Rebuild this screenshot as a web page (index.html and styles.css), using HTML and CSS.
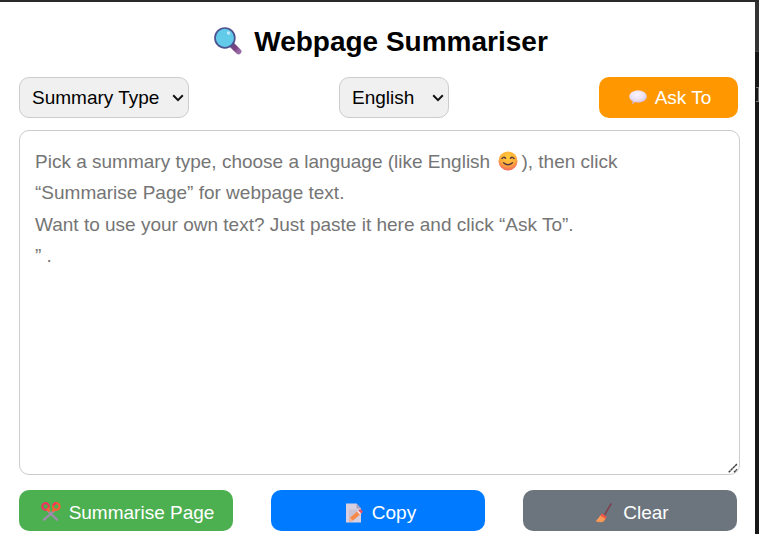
FILE: index.html
```html
<!DOCTYPE html>
<html lang="en">
<head>
<meta charset="utf-8">
<title>Webpage Summariser</title>
<link rel="stylesheet" href="styles.css">
</head>
<body>
<main class="popup">
  <h1 class="title">
    <svg class="title-icon" viewBox="0 0 28 28"><defs><linearGradient id="hd" x1="0" y1="0" x2="1" y2="1"><stop stop-color="#6b4d85"/><stop offset=".5" stop-color="#7b4080"/><stop offset="1" stop-color="#966aa5"/></linearGradient></defs><path d="M18 18l6.500 6.500" stroke="url(#hd)" stroke-width="5.8" stroke-linecap="round"/><circle cx="10.9" cy="10.9" r="9.9" fill="#62cbea" stroke="#4c5190" stroke-width="1.7"/><ellipse cx="14.5" cy="6" rx="1.8" ry="1.5" fill="#c5e8fa" transform="rotate(40 14.5 6)"/></svg>
    <span>Webpage Summariser</span>
  </h1>
  <div class="controls">
    <div class="picker picker-type">
      <select class="select" aria-label="Summary type"><option>Summary Type</option></select>
      <svg class="chevron" viewBox="0 0 12 8"><path d="M1.2 1.3L6 6.1l4.8-4.8" fill="none" stroke="#111" stroke-width="2"/></svg>
    </div>
    <div class="picker picker-lang">
      <select class="select" aria-label="Language"><option>English</option></select>
      <svg class="chevron" viewBox="0 0 12 8"><path d="M1.2 1.3L6 6.1l4.8-4.8" fill="none" stroke="#111" stroke-width="2"/></svg>
    </div>
    <button class="btn ask"><svg class="ask-icon" viewBox="0 0 18 15"><defs><radialGradient id="bb" cx=".45" cy=".3" r=".7"><stop stop-color="#fbf5ff"/><stop offset=".6" stop-color="#eadff2"/><stop offset="1" stop-color="#c7b2dc"/></radialGradient></defs><path d="M9 .4c5 0 8.8 2.6 8.8 6s-3.8 6-8.8 6q-1.7 0-3.200-.4Q4.700 13.900 3 14q.7-1.300.5-3Q.3 9.400.3 6.400C.3 3 4 .4 9 .4z" fill="url(#bb)"/></svg><span>Ask To</span></button>
  </div>
  <section class="editor">
    <p class="hint">Pick a summary type, choose a language (like English <svg class="smile" viewBox="0 0 20 20"><defs><radialGradient id="sm" cx=".5" cy=".3" r=".75"><stop stop-color="#ffcd3d"/><stop offset=".55" stop-color="#ffae37"/><stop offset="1" stop-color="#ef5b68"/></radialGradient></defs><circle cx="10" cy="10" r="9.500" fill="url(#sm)"/><path d="M4 7.500q1.700-2.300 3.600-.3M12.400 7.200q1.900-2 3.600.3M5.500 11.800q4.500 4 9 0" fill="none" stroke="#563344" stroke-width="1.300" stroke-linecap="round"/></svg>), then click<br>“Summarise Page” for webpage text.<br>Want to use your own text? Just paste it here and click “Ask To”.<br>” .</p>
    <svg class="grip" viewBox="0 0 10 10"><path d="M.7 9.300L9 1M6 9.300l3-3" stroke="#444" stroke-width="1.500" stroke-dasharray="2.600 .4"/></svg>
  </section>
  <div class="actions">
    <button class="btn summarise"><svg class="scissors" viewBox="0 0 20 19"><path d="M6.500 8.500l9.500 9.200M13.500 8.500L3 17.700" stroke="#a08bac" stroke-width="2.300" stroke-linecap="round"/><circle cx="4.600" cy="4.500" r="3.300" fill="none" stroke="#f2345f" stroke-width="2.200"/><circle cx="15.300" cy="4.500" r="3.300" fill="none" stroke="#ff5a35" stroke-width="2.200"/><path d="M12.200 3.500q1-2.300 3.100-2.300" fill="none" stroke="#f2345f" stroke-width="2.200"/><path d="M6.500 7.300l2 2M13.400 7.300l-2 2" stroke="#ff632f" stroke-width="2.500"/><path d="M8 5.500l-2 2.500" stroke="#f96432" stroke-width="2"/></svg><span>Summarise Page</span></button>
    <button class="btn copy"><svg class="memo" viewBox="0 0 17 20"><path d="M0 .5h10.500l4.500 5v14H0z" fill="#d8d0e1"/><path d="M10.500.5v5H15z" fill="#aaa0bd"/><path d="M3 6.500h8v9H3z" fill="#c9c1d4"/><path d="M3 18.800l1-4 8-7 3 3-8 6.800z" fill="#f58a49"/><path d="M11 8.700l1.300-1.100 3 3-1.300 1.200z" fill="#eee5ed"/><path d="M12.300 7.600l1.300-1.200q1-.5 1.800.3l1.100 1.200q.5.8-.1 1.500l-1.100 1.200z" fill="#e94f61"/><path d="M3 18.800l1-4 3 2.800z" fill="#f5b397"/></svg><span>Copy</span></button>
    <button class="btn clear"><svg class="broom" viewBox="0 0 16 20"><path d="M15 1L8.500 12" stroke="#813f4c" stroke-width="1.500" stroke-linecap="round"/><path d="M5.500 11.200q3.500.3 4.500 3.300-.8 3.500-3 4.400Q3 19.500.5 18.700L0 17.500q2.500-2 3.500-4z" fill="#f99150"/><path d="M5.800 10.600l4.800 3.200-.9 1.900-5.200-3.200z" fill="#ef5548"/><path d="M6.500 15.500l-2.300 3M4.500 14.500l-2.500 3" stroke="#ffb069"/></svg><span>Clear</span></button>
  </div>
</main>
<aside class="backdrop"><span class="edge"></span><span class="notch"></span></aside>
</body>
</html>
```
FILE: styles.css
```css
* { box-sizing: border-box; }
body {
  margin: 0;
  width: 759px;
  height: 534px;
  overflow: hidden;
  display: flex;
  border-top: 2px solid #2b292b;
  background: #fff;
  font: 19px/22px "Liberation Sans", Arial, sans-serif;
}
.popup { width: 755px; padding: 0 15px 0 19px; }
.backdrop { width: 4px; background: #171717; }
.edge { display: block; height: 50px; background: #343434; border-bottom: 1px solid #444; }
.notch { display: block; width: 3px; height: 15px; margin: 35px 0 0 1px; border: solid #777; border-width: 1px 1px 1px 0; }
.title {
  display: flex;
  justify-content: center;
  align-items: center;
  height: 75px;
  margin: 0;
  padding: 4px 0 0 3px;
  font-size: 28px;
  line-height: 36px;
}
.title-icon { width: 28px; height: 28px; margin: -1px 12px 0 0; }
.controls { display: flex; justify-content: space-between; width: 719px; height: 41px; }
.picker { display: flex; align-items: center; height: 41px; border: 1px solid #ccc; border-radius: 10px; background: #f0f0f0; }
.picker-type { width: 170px; }
.picker-lang { width: 110px; }
.select { appearance: none; flex: 1; min-width: 0; height: 39px; padding: 1px 0 0 12px; border: 0; background: none; color: #000; font: inherit; }
.chevron { width: 12px; height: 8px; margin-right: 4px; flex: none; }
.btn {
  display: flex;
  justify-content: center;
  align-items: center;
  height: 41px;
  padding: 0;
  border: 0;
  border-radius: 10px;
  color: #fff;
  font: inherit;
}
.btn span { padding-top: 4px; }
.ask { width: 139px; background: #ff9800; }
.btn.ask span { padding-top: 2px; }
.ask-icon { width: 18px; height: 15px; margin: 0 8px 0 3px; }
.btn.ask { padding-bottom: 1px; }
.editor {
  position: relative;
  width: 721px;
  height: 345px;
  margin: 12px 0 15px;
  padding: 15px;
  border: 1px solid #ccc;
  border-radius: 10px;
}
.hint { margin: 0; color: #757575; line-height: 31.4px; white-space: nowrap; }
.smile { width: 20px; height: 20px; margin: 0 3px 0 3px; vertical-align: -3px; }
.grip { position: absolute; right: 1px; bottom: 1px; width: 10px; height: 10px; }
.actions { display: flex; gap: 38px; }
.actions .btn { width: 214px; }
.summarise { background: #4caf50; }
.copy { background: #007bff; }
.clear { background: #6c757d; }
.scissors { width: 20px; height: 19px; margin: 2px 8px 0 3px; }
.memo { width: 17px; height: 20px; margin: 4px 9px 0 6px; }
.broom { width: 16px; height: 20px; margin: 4px 11px 0 5px; }
```
